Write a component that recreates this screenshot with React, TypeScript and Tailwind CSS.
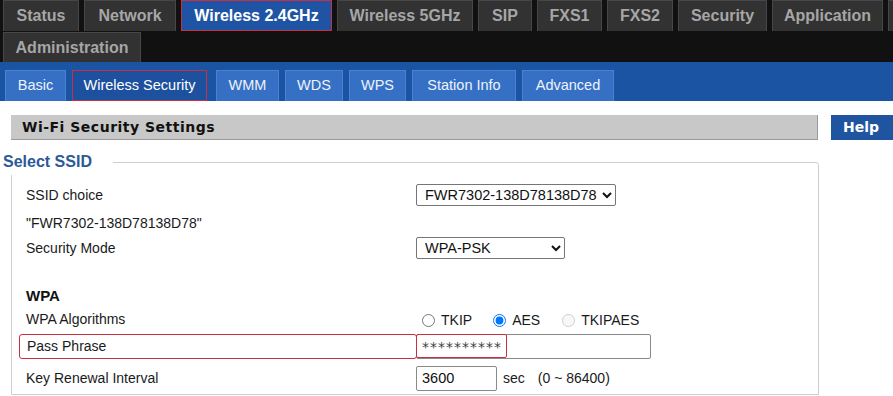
import type React from "react"

const topTabs = [
  { label: "Status", w: "w-[76px]" },
  { label: "Network", w: "w-[92px]" },
  { label: "Wireless 2.4GHz", w: "w-[151px]", active: true },
  { label: "Wireless 5GHz", w: "w-[136px]" },
  { label: "SIP", w: "w-[54px]" },
  { label: "FXS1", w: "w-[65px]" },
  { label: "FXS2", w: "w-[66px]" },
  { label: "Security", w: "w-[89px]" },
  { label: "Application", w: "w-[111px]" },
]

const subTabs = [
  { label: "Basic", w: "w-[61px]", ml: "ml-[5px]" },
  { label: "Wireless Security", w: "w-[135px]", ml: "ml-[6px]", active: true },
  { label: "WMM", w: "w-[63px]", ml: "ml-[9px]" },
  { label: "WDS", w: "w-[58px]", ml: "ml-[6px]" },
  { label: "WPS", w: "w-[57px]", ml: "ml-[6px]" },
  { label: "Station Info", w: "w-[104px]", ml: "ml-[6px]" },
  { label: "Advanced", w: "w-[92px]", ml: "ml-[6px]" },
]

const font = "font-['Liberation_Sans',Arial,sans-serif]"

const Row: React.FC<{ h: string; label?: React.ReactNode; children?: React.ReactNode }> = ({ h, label, children }) => (
  <div className={`flex items-center ${h}`}>
    <div className="w-[404px] shrink-0 pl-[14px] text-[14px] text-[#1a1a1a]">{label}</div>
    <div className="flex items-center text-[14px] text-[#1a1a1a]">{children}</div>
  </div>
)

export default function App() {
  return (
    <div className={`w-[893px] h-[396px] overflow-hidden bg-white ${font}`}>
      {/* main nav */}
      <div className="bg-[#111111] h-[62px] overflow-hidden">
        <div className="flex gap-[5px] pl-[3px] whitespace-nowrap">
          {topTabs.map((t) => (
            <div
              key={t.label}
              className={`${t.w} shrink-0 h-[31px] flex items-center justify-center text-[16px] font-bold ${
                t.active
                  ? "bg-[#1f54a5] text-white border border-[#c8303f]"
                  : "bg-[#323232] text-[#a6a6a6] border-t border-x border-[#474747]"
              }`}
            >
              {t.label}
            </div>
          ))}
          <div className="w-[90px] shrink-0 h-[31px] bg-[#323232] border-t border-x border-[#474747]" />
        </div>
        <div className="flex pl-[3px] mt-[1px]">
          <div className="w-[138px] h-[30px] flex items-center justify-center text-[16px] font-bold bg-[#323232] text-[#a6a6a6] border-t border-x border-[#474747]">
            Administration
          </div>
        </div>
      </div>

      {/* sub nav */}
      <div className="bg-[#1b54a3] h-[39px] flex items-end">
        {subTabs.map((t) => (
          <div
            key={t.label}
            className={`${t.w} ${t.ml} shrink-0 h-[31px] flex items-center justify-center text-[14.5px] ${
              t.active
                ? "bg-[#1d509e] text-white border border-[#c8303f]"
                : "bg-[#3570c5] text-[#eef3fb] border-t border-x border-[#4a82d0]"
            }`}
          >
            {t.label}
          </div>
        ))}
      </div>

      {/* title row */}
      <div className="flex mt-[14px]">
        <div className="ml-[11px] w-[807px] shrink-0 h-[25px] bg-[#c8c8c8] border-b border-r border-[#9a9a9a] flex items-center pl-[11px] font-['DejaVu_Sans',sans-serif] font-bold text-[14px] tracking-[0.5px] text-[#111]">
          Wi-Fi Security Settings
        </div>
        <div className="ml-[13px] w-[70px] shrink-0 h-[25px] bg-[#1f55a0] flex items-center pl-[12px] font-['DejaVu_Sans',sans-serif] font-bold text-[14px] text-white">
          Help
        </div>
      </div>

      {/* fieldset */}
      <fieldset className="ml-[11px] mt-[9px] w-[808px] border border-[#cfcfcf] rounded-tr-[3px] pt-[6px]">
        <legend className="-ml-[9px] pr-[21px] bg-white text-[16px] leading-[26px] font-bold text-[#2c5a98]">
          Select SSID
        </legend>

        <Row h="h-[28px]" label="SSID choice">
          <select
            defaultValue="a"
            className="w-[200px] h-[22px] border border-[#767676] rounded-[2px] pl-[4px] text-[14.5px] text-[#111] bg-white"
          >
            <option value="a">FWR7302-138D78138D78</option>
          </select>
        </Row>
        <Row h="h-[28px]" label={'"FWR7302-138D78138D78"'} />
        <Row h="h-[22px]" label="Security Mode">
          <select
            defaultValue="psk"
            className="w-[149px] h-[22px] border border-[#767676] rounded-[2px] pl-[4px] text-[14.5px] text-[#111] bg-white"
          >
            <option value="psk">WPA-PSK</option>
          </select>
        </Row>
        <div className="h-[26px]" />
        <Row h="h-[22px]" label={<span className="font-bold text-[15px] text-[#111]">WPA</span>} />
        <Row h="h-[24px]" label="WPA Algorithms">
          <label className="flex items-center mt-[3px]">
            <input type="radio" name="alg" className="w-[13px] h-[13px] ml-[6px] mr-[6px]" />
            TKIP
          </label>
          <label className="flex items-center mt-[3px] ml-[21px]">
            <input type="radio" name="alg" defaultChecked className="w-[13px] h-[13px] mr-[6px]" />
            AES
          </label>
          <label className="flex items-center mt-[3px] ml-[22px]">
            <input type="radio" name="alg" disabled className="w-[13px] h-[13px] mr-[6px]" />
            TKIPAES
          </label>
        </Row>
        <div className="flex items-center h-[31px]">
          <div className="ml-[7px] w-[398px] shrink-0 h-[25px] pl-[7px] flex items-center border border-[#c8303f] rounded-[3px] text-[14px] text-[#1a1a1a]">
            Pass Phrase
          </div>
          <div className="relative -ml-[1px]">
            <input
              type="text"
              defaultValue="**********"
              className="w-[235px] h-[25px] border border-[#8a8a8a] rounded-[2px] pl-[5px] font-['DejaVu_Sans',sans-serif] text-[14px] tracking-[1px] text-[#444]"
            />
            <div className="absolute left-0 top-0 w-[91px] h-[24px] border border-[#c8303f] rounded-[2px]" />
          </div>
        </div>
        <Row h="h-[32px]" label="Key Renewal Interval">
          <input
            type="text"
            defaultValue="3600"
            className="w-[81px] h-[25px] border border-[#8a8a8a] rounded-[2px] pl-[5px] text-[14.5px] text-[#111]"
          />
          <span className="ml-[6px]">sec</span>
          <span className="ml-[13px]">(0 ~ 86400)</span>
        </Row>
      </fieldset>
    </div>
  )
}
